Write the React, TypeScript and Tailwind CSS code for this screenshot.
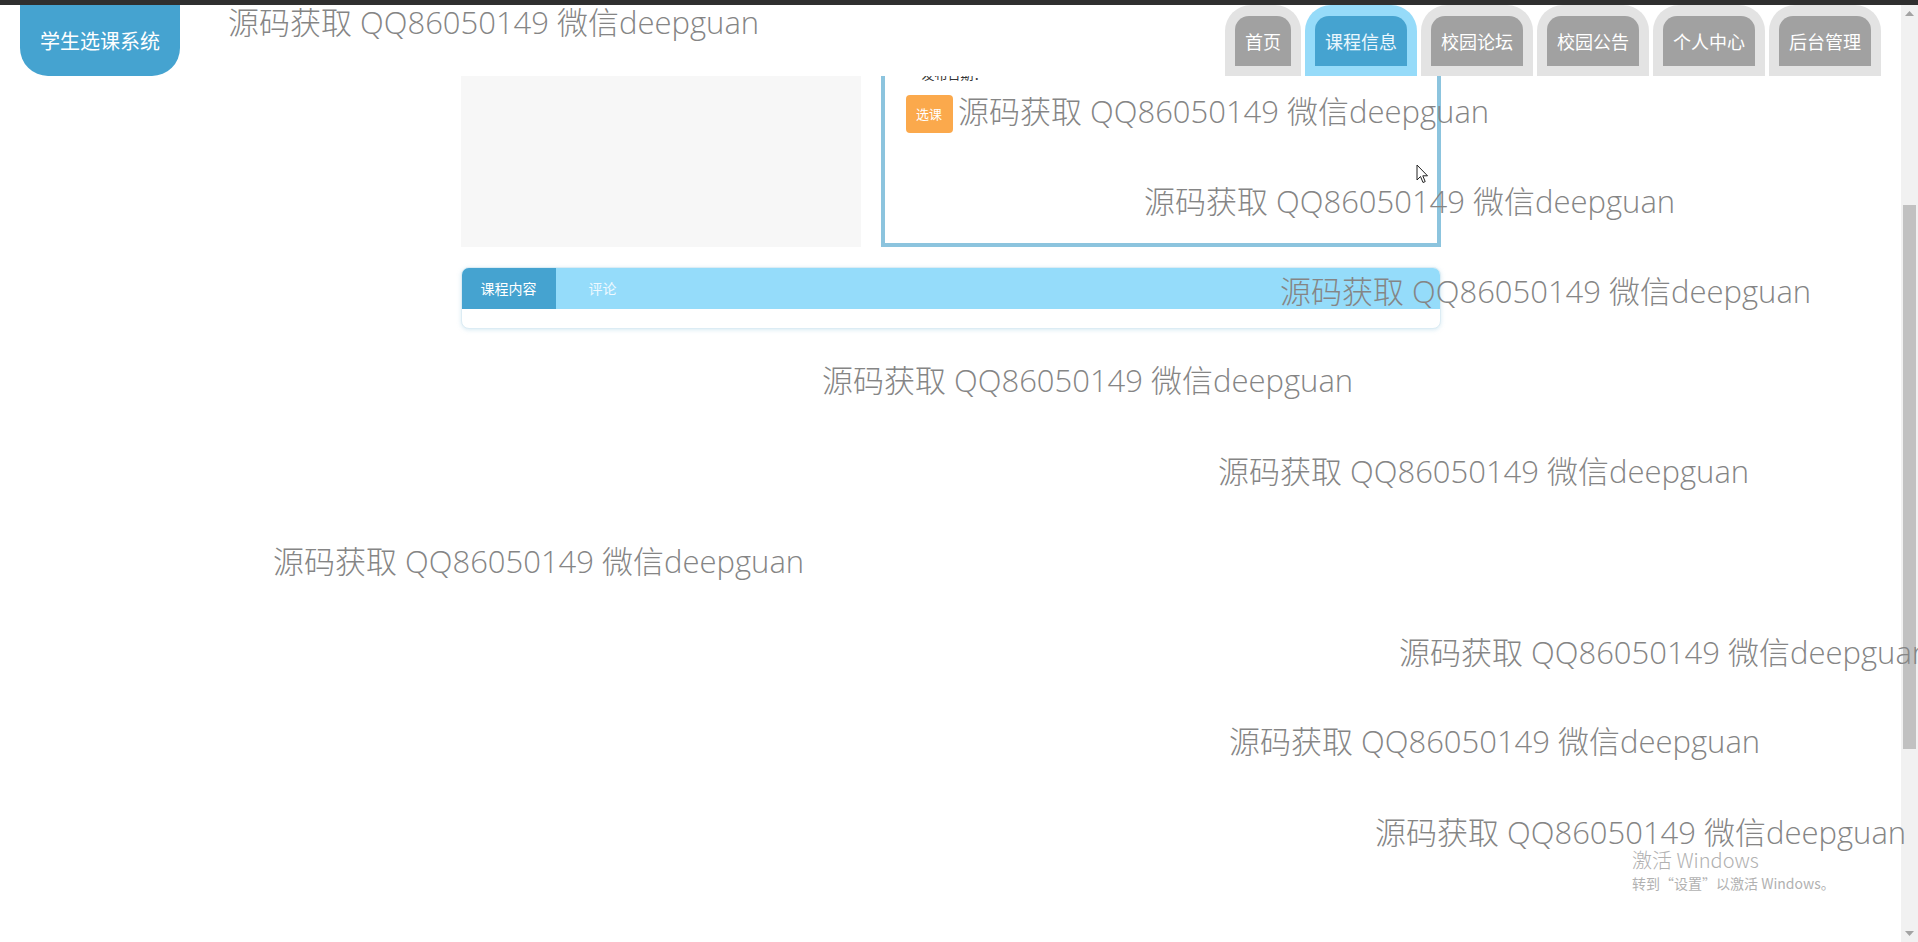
import React from "react";

const navItems = [
  { label: "首页", active: false },
  { label: "课程信息", active: true },
  { label: "校园论坛", active: false },
  { label: "校园公告", active: false },
  { label: "个人中心", active: false },
  { label: "后台管理", active: false },
];

const marks = [
  "left-[228px] top-[7px]",
  "left-[958px] top-[96px]",
  "left-[1144px] top-[186px]",
  "left-[1280px] top-[276px]",
  "left-[822px] top-[365px]",
  "left-[1218px] top-[456px]",
  "left-[273px] top-[546px]",
  "left-[1399px] top-[637px]",
  "left-[1229px] top-[726px]",
  "left-[1375px] top-[817px]",
];

function Watermark({ pos }: { pos: string }) {
  return (
    <div
      className={`absolute ${pos} whitespace-nowrap text-[31px] leading-[31px] font-light text-[#858585] font-['Open_Sans','Noto_Sans_CJK_SC',sans-serif]`}
    >
      源码获取 QQ86050149 微信deepguan
    </div>
  );
}

export default function App() {
  return (
    <div className="relative w-full h-[942px] overflow-hidden bg-white flex flex-col font-['Noto_Sans_CJK_SC',sans-serif]">
      <div className="h-[5px] bg-[#2f2f2f] shrink-0" />
      <div className="flex flex-1 min-h-0">
        <div className="relative flex-1 overflow-hidden">
          {/* header */}
          <div className="h-[71px] flex justify-between items-start">
            <div className="ml-[20px] w-[160px] h-[71px] rounded-b-[28px] bg-[#45a3d0] flex items-center justify-center text-white text-[20px]">
              学生选课系统
            </div>
            <div className="mr-[20px] flex gap-[4px]">
              {navItems.map((n) =>
                n.active ? (
                  <div key={n.label} className="px-[10px] pt-[11px] pb-[10px] rounded-t-[26px] bg-[#96dbf9]">
                    <div className="h-[50px] px-[10px] rounded-t-[14px] bg-[#45a3d0] flex items-center text-[18px] text-[#eaf7fd]">
                      {n.label}
                    </div>
                  </div>
                ) : (
                  <div key={n.label} className="px-[10px] pt-[11px] pb-[10px] rounded-t-[26px] bg-[#e3e3e3]">
                    <div className="h-[50px] px-[10px] rounded-t-[14px] bg-[#a1a1a1] flex items-center text-[18px] text-white">
                      {n.label}
                    </div>
                  </div>
                )
              )}
            </div>
          </div>

          {/* content */}
          <div className="w-[980px] mx-auto">
            <div className="flex gap-[20px] h-[171px]">
              <div className="w-[400px] bg-[#f7f7f7]" />
              <div className="w-[560px] border-x-4 border-b-4 border-[#8cc4de] bg-white">
                <div className="h-[5px] overflow-hidden">
                  <div className="-mt-[9px] pl-[37px] text-[13px] leading-[14px] text-[#333]">发布日期：</div>
                </div>
                <div className="mt-[14px] ml-[21px] w-[47px] h-[38px] rounded-[4px] bg-[#fba94c] flex items-center justify-center text-white text-[13px]">
                  选课
                </div>
              </div>
            </div>

            <div className="mt-[20px] rounded-[8px] border border-[#dcecf4] shadow-[0_1px_4px_rgba(140,196,222,0.35)] overflow-hidden bg-white">
              <div className="flex h-[41px] bg-[#95dcfa]">
                <div className="w-[94px] bg-[#45a3d0] flex items-center justify-center text-white text-[14px]">课程内容</div>
                <div className="w-[94px] flex items-center justify-center text-[#eef9ff] text-[14px]">评论</div>
              </div>
              <div className="h-[19px]" />
            </div>
          </div>

          {/* cursor */}
          <svg className="absolute left-[1416px] top-[159px]" width="13" height="20" viewBox="0 0 13 20">
            <path d="M1 1 L1 16 L4.5 12.5 L7 18.5 L9.2 17.6 L6.8 11.8 L11.5 11.8 Z" fill="white" stroke="#222" strokeWidth="1" strokeLinejoin="round" />
          </svg>

          {/* windows activation */}
          <div className="absolute left-[1632px] top-[843px] text-[#b1b1b1] whitespace-nowrap font-['Noto_Sans_CJK_SC',sans-serif]">
            <div className="text-[20px] leading-[24px] font-light">激活 Windows</div>
            <div className="text-[14px] leading-[20px] mt-[1px]">转到“设置”以激活 Windows。</div>
          </div>
        </div>

        {/* scrollbar */}
        <div className="w-[17px] bg-[#f1f1f1] flex flex-col items-center shrink-0">
          <div className="h-[17px] flex items-center justify-center">
            <svg width="9" height="5" viewBox="0 0 9 5"><path d="M0 5 L4.5 0 L9 5 Z" fill="#a3a3a3" /></svg>
          </div>
          <div className="h-[183px]" />
          <div className="w-[13px] h-[544px] bg-[#c1c1c1]" />
          <div className="flex-1" />
          <div className="h-[17px] flex items-center justify-center">
            <svg width="9" height="5" viewBox="0 0 9 5"><path d="M0 0 L9 0 L4.5 5 Z" fill="#a3a3a3" /></svg>
          </div>
        </div>
      </div>

      {/* watermarks overlay */}
      {marks.map((m) => (
        <Watermark key={m} pos={m} />
      ))}
    </div>
  );
}
